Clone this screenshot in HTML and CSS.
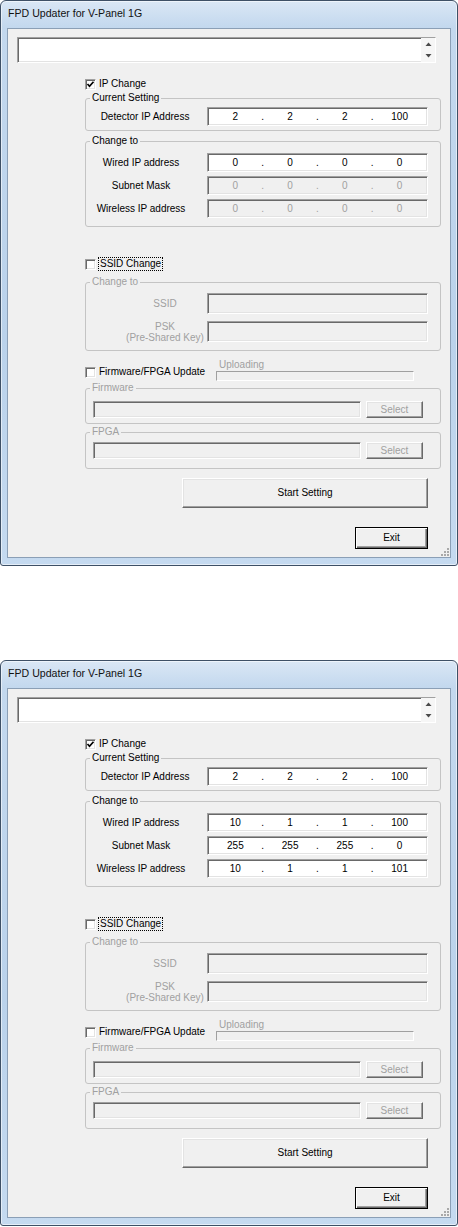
FILE: index.html
```html
<!DOCTYPE html>
<html lang="en">
<head>
    <meta charset="UTF-8">
    <title>FPD Updater for V-Panel 1G</title>
    <link rel="stylesheet" href="styles.css">
</head>
<body>
    <!-- first state: only wired address enabled -->
    <div class="window">
        <div class="titlebar">FPD Updater for V-Panel 1G</div>
        <div class="client">
            <div class="log sunken">
                <div class="log-text"></div>
                <div class="log-scroll">
                    <svg width="7" height="5" viewBox="0 0 7 5"><path d="M3.5 0.5 L6.5 4 L0.5 4 Z" fill="#4a4a4a"/></svg>
                    <svg width="7" height="5" viewBox="0 0 7 5"><path d="M0.5 1 L6.5 1 L3.5 4.5 Z" fill="#4a4a4a"/></svg>
                </div>
            </div>

            <div class="panel">
                <label class="check check-ip">
                    <span class="box sunken"><svg width="9" height="9" viewBox="0 0 9 9"><path d="M1.5 4 L3.5 6.3 L7.5 1.8" fill="none" stroke="#000" stroke-width="1.7"/></svg></span>
                    <span>IP Change</span>
                </label>

                <fieldset class="group group-current">
                    <legend>Current Setting</legend>
                    <div class="fields">
                        <span class="field-label label-detector">Detector IP Address</span>
                        <div class="ip sunken"><span>2</span><i>.</i><span>2</span><i>.</i><span>2</span><i>.</i><span>100</span></div>
                    </div>
                </fieldset>

                <fieldset class="group group-change">
                    <legend>Change to</legend>
                    <div class="fields">
                        <span class="field-label">Wired IP address</span>
                        <div class="ip sunken"><span>0</span><i>.</i><span>0</span><i>.</i><span>0</span><i>.</i><span>0</span></div>
                        <span class="field-label">Subnet Mask</span>
                        <div class="ip sunken off"><span>0</span><i>.</i><span>0</span><i>.</i><span>0</span><i>.</i><span>0</span></div>
                        <span class="field-label">Wireless IP address</span>
                        <div class="ip sunken off"><span>0</span><i>.</i><span>0</span><i>.</i><span>0</span><i>.</i><span>0</span></div>
                    </div>
                </fieldset>

                <label class="check check-ssid">
                    <span class="box sunken"></span>
                    <span class="focus">SSID Change</span>
                </label>

                <fieldset class="group group-ssid off-text">
                    <legend>Change to</legend>
                    <div class="fields fields-ssid">
                        <span class="field-label">SSID</span>
                        <div class="edit sunken off"></div>
                        <span class="field-label label-psk">PSK<br>(Pre-Shared Key)</span>
                        <div class="edit sunken off"></div>
                    </div>
                </fieldset>

                <div class="fw-row">
                    <label class="check check-fw">
                        <span class="box sunken"></span>
                        <span>Firmware/FPGA Update</span>
                    </label>
                    <div class="upload">
                        <span class="upload-label">Uploading</span>
                        <div class="progress"></div>
                    </div>
                </div>

                <fieldset class="group group-fw off-text">
                    <legend>Firmware</legend>
                    <div class="file-row">
                        <div class="file sunken off"></div>
                        <button class="btn btn-select" disabled>Select</button>
                    </div>
                </fieldset>

                <fieldset class="group group-fpga off-text">
                    <legend>FPGA</legend>
                    <div class="file-row">
                        <div class="file sunken off"></div>
                        <button class="btn btn-select" disabled>Select</button>
                    </div>
                </fieldset>
            </div>

            <div class="actions">
                <button class="btn btn-start">Start Setting</button>
                <button class="btn btn-exit">Exit</button>
            </div>

            <svg class="grip" width="11" height="11" viewBox="0 0 11 11">
                <g fill="#a9a9a9">
                    <rect x="8" y="2" width="2" height="2"/>
                    <rect x="5" y="5" width="2" height="2"/><rect x="8" y="5" width="2" height="2"/>
                    <rect x="2" y="8" width="2" height="2"/><rect x="5" y="8" width="2" height="2"/><rect x="8" y="8" width="2" height="2"/>
                </g>
            </svg>
        </div>
    </div>

    <!-- second state: all addresses filled in -->
    <div class="window">
        <div class="titlebar">FPD Updater for V-Panel 1G</div>
        <div class="client">
            <div class="log sunken">
                <div class="log-text"></div>
                <div class="log-scroll">
                    <svg width="7" height="5" viewBox="0 0 7 5"><path d="M3.5 0.5 L6.5 4 L0.5 4 Z" fill="#4a4a4a"/></svg>
                    <svg width="7" height="5" viewBox="0 0 7 5"><path d="M0.5 1 L6.5 1 L3.5 4.5 Z" fill="#4a4a4a"/></svg>
                </div>
            </div>

            <div class="panel">
                <label class="check check-ip">
                    <span class="box sunken"><svg width="9" height="9" viewBox="0 0 9 9"><path d="M1.5 4 L3.5 6.3 L7.5 1.8" fill="none" stroke="#000" stroke-width="1.7"/></svg></span>
                    <span>IP Change</span>
                </label>

                <fieldset class="group group-current">
                    <legend>Current Setting</legend>
                    <div class="fields">
                        <span class="field-label label-detector">Detector IP Address</span>
                        <div class="ip sunken"><span>2</span><i>.</i><span>2</span><i>.</i><span>2</span><i>.</i><span>100</span></div>
                    </div>
                </fieldset>

                <fieldset class="group group-change">
                    <legend>Change to</legend>
                    <div class="fields">
                        <span class="field-label">Wired IP address</span>
                        <div class="ip sunken"><span>10</span><i>.</i><span>1</span><i>.</i><span>1</span><i>.</i><span>100</span></div>
                        <span class="field-label">Subnet Mask</span>
                        <div class="ip sunken"><span>255</span><i>.</i><span>255</span><i>.</i><span>255</span><i>.</i><span>0</span></div>
                        <span class="field-label">Wireless IP address</span>
                        <div class="ip sunken"><span>10</span><i>.</i><span>1</span><i>.</i><span>1</span><i>.</i><span>101</span></div>
                    </div>
                </fieldset>

                <label class="check check-ssid">
                    <span class="box sunken"></span>
                    <span class="focus">SSID Change</span>
                </label>

                <fieldset class="group group-ssid off-text">
                    <legend>Change to</legend>
                    <div class="fields fields-ssid">
                        <span class="field-label">SSID</span>
                        <div class="edit sunken off"></div>
                        <span class="field-label label-psk">PSK<br>(Pre-Shared Key)</span>
                        <div class="edit sunken off"></div>
                    </div>
                </fieldset>

                <div class="fw-row">
                    <label class="check check-fw">
                        <span class="box sunken"></span>
                        <span>Firmware/FPGA Update</span>
                    </label>
                    <div class="upload">
                        <span class="upload-label">Uploading</span>
                        <div class="progress"></div>
                    </div>
                </div>

                <fieldset class="group group-fw off-text">
                    <legend>Firmware</legend>
                    <div class="file-row">
                        <div class="file sunken off"></div>
                        <button class="btn btn-select" disabled>Select</button>
                    </div>
                </fieldset>

                <fieldset class="group group-fpga off-text">
                    <legend>FPGA</legend>
                    <div class="file-row">
                        <div class="file sunken off"></div>
                        <button class="btn btn-select" disabled>Select</button>
                    </div>
                </fieldset>
            </div>

            <div class="actions">
                <button class="btn btn-start">Start Setting</button>
                <button class="btn btn-exit">Exit</button>
            </div>

            <svg class="grip" width="11" height="11" viewBox="0 0 11 11">
                <g fill="#a9a9a9">
                    <rect x="8" y="2" width="2" height="2"/>
                    <rect x="5" y="5" width="2" height="2"/><rect x="8" y="5" width="2" height="2"/>
                    <rect x="2" y="8" width="2" height="2"/><rect x="5" y="8" width="2" height="2"/><rect x="8" y="8" width="2" height="2"/>
                </g>
            </svg>
        </div>
    </div>
</body>
</html>
```

FILE: styles.css
```css
body {
    margin: 0;
    background: #fff;
    font-family: 'Liberation Sans', Arial, sans-serif;
    font-size: 10px;
    line-height: 12px;
    color: #000;
}

/* window frame (Win7 style) */
.window {
    box-sizing: border-box;
    width: 458px;
    height: 566px;
    display: flex;
    flex-direction: column;
    padding: 0 6px 7px 6px;
    border: 1px solid #3e5066;
    border-radius: 6px 6px 3px 3px;
    background: linear-gradient(180deg, #dae7f5 0, #c3d8ee 26px, #bad2eb 60%, #c5daf0 100%);
    box-shadow: inset 0 0 0 1px rgba(255, 255, 255, 0.55);
}

.window + .window {
    margin-top: 94px;
}

.titlebar {
    height: 27px;
    line-height: 25px;
    padding-left: 1px;
    font-size: 10.6px;
    color: #111;
}

.client {
    position: relative;
    flex: 1;
    border: 1px solid #8b9fb6;
    background: #f0f0f0;
}

/* 3D sunken edge used by edits, checkboxes, ip boxes */
.sunken {
    box-sizing: border-box;
    border: 1px solid;
    border-color: #a0a0a0 #fff #fff #a0a0a0;
    box-shadow: inset 1px 1px 0 #696969, inset -1px -1px 0 #e3e3e3;
    background: #fff;
}

.sunken.off {
    background: #f0f0f0;
    color: #a0a0a0;
}

.log {
    display: flex;
    width: 419px;
    height: 26px;
    margin: 8px 0 0 9px;
}

.log-text {
    flex: 1;
}

.log-scroll {
    width: 14px;
    display: flex;
    flex-direction: column;
    align-items: center;
    justify-content: space-between;
    padding: 4px 0 4px;
    background: #f6f6f6;
}

.log-scroll svg {
    display: block;
}

.panel {
    width: 356px;
    margin-left: 77px;
}

/* checkboxes */
.check {
    display: flex;
    align-items: center;
    gap: 3px;
    height: 12px;
}

.box {
    width: 11px;
    height: 11px;
    display: flex;
    align-items: center;
    justify-content: center;
}

.box svg {
    display: block;
}

.check-ip {
    margin-top: 15px;
}

.check-ssid {
    margin-top: 31px;
}

.focus {
    outline: 1px dotted #000;
    padding: 0 1px;
}

/* group boxes */
.group {
    margin: 0;
    padding: 0;
    border: 1px solid #c4c4c4;
    border-radius: 3px;
    min-width: 0;
}

.group legend {
    margin-left: 4px;
    padding: 0 2px;
    line-height: 12px;
}

.off-text,
.off-text legend {
    color: #a0a0a0;
}

.group-current {
    margin-top: 2px;
}

.group-change {
    margin-top: 4px;
}

.group-ssid {
    margin-top: 6px;
}

.fields {
    display: grid;
    grid-template-columns: 104px 221px;
    column-gap: 14px;
    row-gap: 4px;
    align-items: center;
    padding-left: 3px;
}

.group-current .fields {
    padding-top: 3px;
    padding-bottom: 4px;
}

.group-change .fields {
    padding-top: 6px;
    padding-bottom: 8px;
}

.field-label {
    text-align: center;
}

.label-detector {
    padding-left: 8px;
}

.fields-ssid {
    grid-template-columns: 84px 221px;
    grid-auto-rows: 21px;
    column-gap: 0;
    row-gap: 7px;
    padding: 5px 0 8px 37px;
}

.label-psk {
    line-height: 11px;
}

.ip {
    display: grid;
    grid-template-columns: 1fr 0 1fr 0 1fr 0 1fr;
    align-items: center;
    height: 19px;
    text-align: center;
}

.ip i {
    font-style: normal;
    display: flex;
    justify-content: center;
    width: 0;
}

.edit {
    height: 21px;
}

/* firmware / fpga */
.fw-row {
    display: flex;
    align-items: flex-end;
    height: 22px;
    margin-top: 8px;
}

.check-fw {
    width: 131px;
    margin-bottom: 3px;
}

.upload {
    display: flex;
    flex-direction: column;
}

.upload-label {
    color: #a0a0a0;
    padding-left: 3px;
}

.progress {
    box-sizing: border-box;
    width: 198px;
    height: 10px;
    border: 1px solid;
    border-color: #a0a0a0 #fff #fff #a0a0a0;
    background: #f0f0f0;
}

.group-fw {
    margin-top: 1px;
}

.group-fpga {
    margin-top: 2px;
}

.file-row {
    display: flex;
    gap: 5px;
    padding-left: 7px;
}

.group-fw .file-row {
    padding-top: 7px;
    padding-bottom: 5px;
}

.group-fpga .file-row {
    padding-top: 4px;
    padding-bottom: 9px;
}

.file {
    width: 268px;
    height: 17px;
}

/* classic buttons */
.btn {
    box-sizing: border-box;
    padding: 0;
    font: inherit;
    color: #000;
    background: #f0f0f0;
    border: 1px solid;
    border-color: #fff #696969 #696969 #fff;
    box-shadow: inset -1px -1px 0 #a0a0a0, inset 1px 1px 0 #e3e3e3;
}

.btn:disabled {
    color: #a0a0a0;
}

.btn-select {
    width: 57px;
    height: 17px;
}

.actions {
    display: flex;
    flex-direction: column;
    align-items: flex-end;
    padding-right: 22px;
}

.btn-start {
    width: 246px;
    height: 30px;
    margin-top: 9px;
}

.btn-exit {
    width: 73px;
    height: 22px;
    margin-top: 19px;
    border-color: #000;
    box-shadow: inset 1px 1px 0 #fff, inset -1px -1px 0 #696969, inset -2px -2px 0 #a0a0a0;
}

.grip {
    position: absolute;
    right: 0;
    bottom: 0;
}
```
